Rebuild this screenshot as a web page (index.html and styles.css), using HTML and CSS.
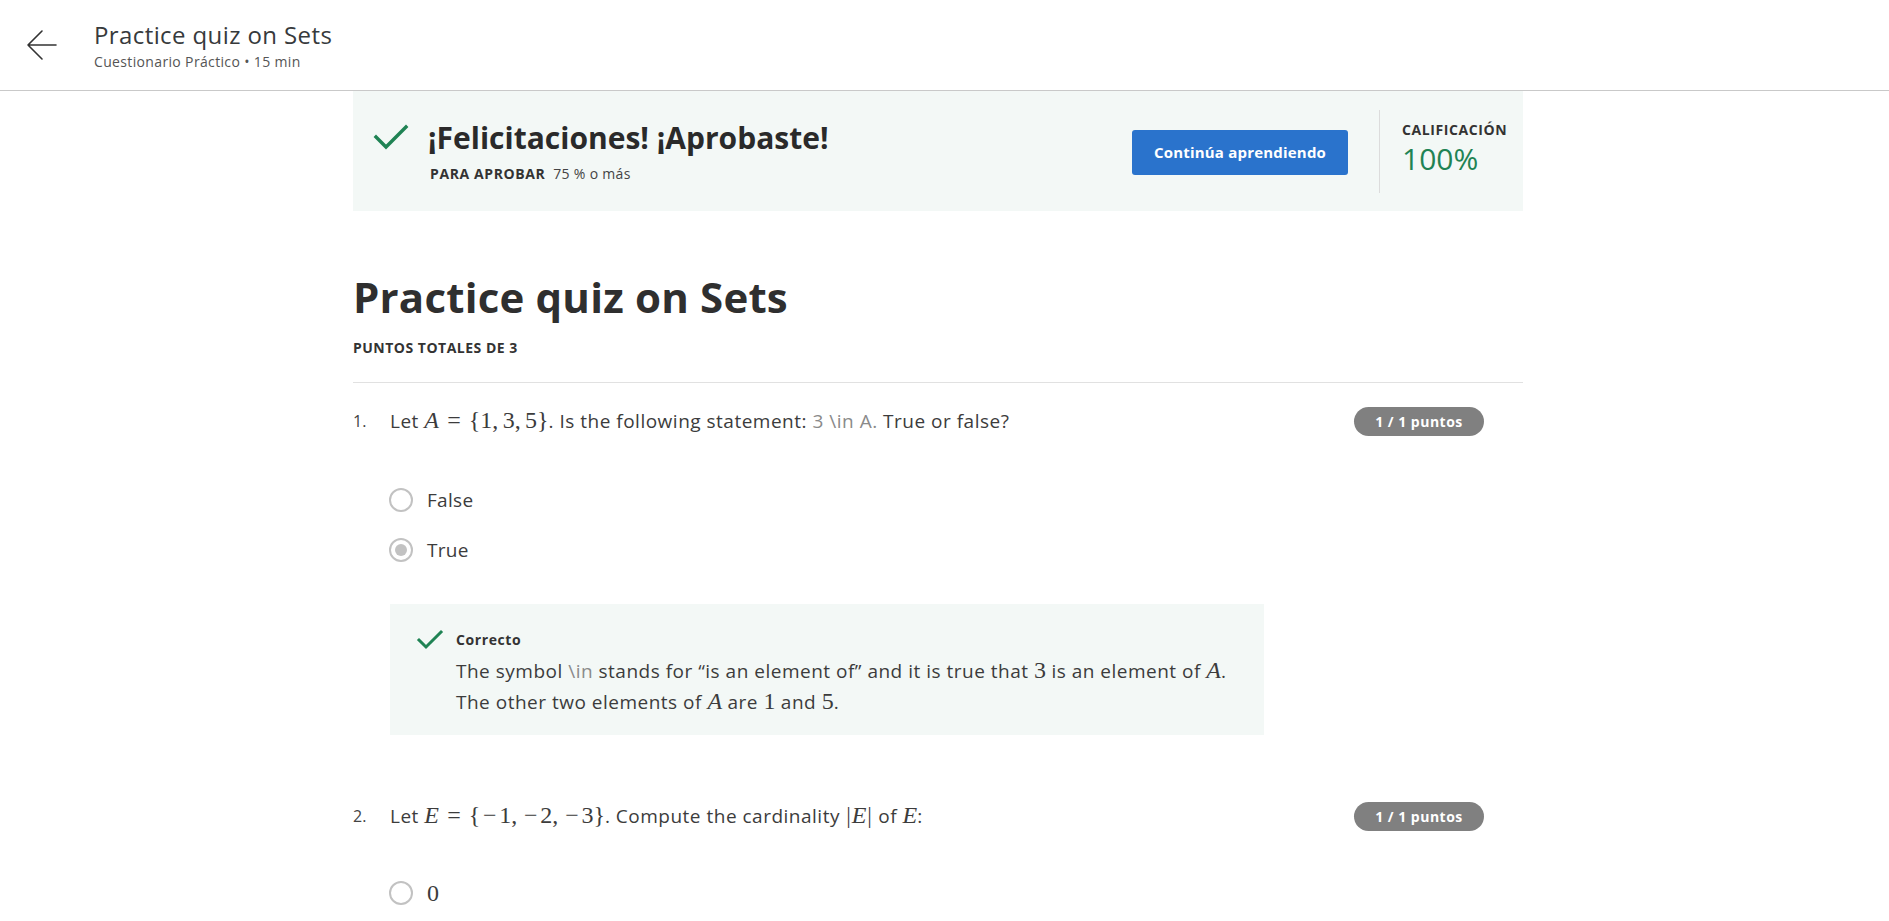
FILE: index.html
```html
<!DOCTYPE html>
<html lang="es">
<head>
<meta charset="utf-8">
<title>Practice quiz on Sets</title>
<link rel="stylesheet" href="styles.css">
</head>
<body>
<header class="topbar">
  <a class="back" href="#" aria-label="Volver">
    <svg width="32" height="32" viewBox="0 0 32 32" fill="none" stroke="#333" stroke-width="1.6" stroke-linecap="round" stroke-linejoin="round">
      <path d="M30 16 H2 M16 2 L2 16 L16 30"/>
    </svg>
  </a>
  <div class="topbar-text">
    <div class="topbar-title">Practice quiz on Sets</div>
    <div class="topbar-sub">Cuestionario Práctico • 15 min</div>
  </div>
</header>

<main class="page">
  <section class="banner">
    <div class="banner-main">
      <svg class="check big" width="36" height="26" viewBox="0 0 36 26" fill="none" stroke="#1f8354" stroke-width="3.4" stroke-linecap="square">
        <path d="M3 13 L13 23 L33 3"/>
      </svg>
      <div>
        <div class="banner-title">¡Felicitaciones! ¡Aprobaste!</div>
        <div class="banner-sub"><span class="label">PARA APROBAR</span> 75 % o más</div>
      </div>
    </div>
    <button class="primary">Continúa aprendiendo</button>
    <div class="grade">
      <div class="label">CALIFICACIÓN</div>
      <div class="grade-value">100%</div>
    </div>
  </section>

  <h1 class="quiz-title">Practice quiz on Sets</h1>
  <div class="points-total">PUNTOS TOTALES DE 3</div>

  <section class="question q1">
    <div class="q-head">
      <span class="q-num">1.</span>
      <div class="q-text">Let <span class="m"><i>A</i><span class="rel">=</span>{1,<span class="pu"></span>3,<span class="pu"></span>5}</span>. Is the following statement: <span class="muted">3 \in A.</span> True or false?</div>
      <span class="badge">1 / 1 puntos</span>
    </div>
    <div class="options">
      <label class="opt"><span class="radio"></span>False</label>
      <label class="opt"><span class="radio on"></span>True</label>
    </div>
    <div class="feedback">
      <svg class="check small" width="28" height="22" viewBox="0 0 28 22" fill="none" stroke="#1f8354" stroke-width="3" stroke-linecap="square">
        <path d="M3 11 L10 18 L25 3"/>
      </svg>
      <div>
        <div class="fb-title">Correcto</div>
        <p class="fb-text">The symbol <span class="muted">\in</span> stands for “is an element of” and it is true that <span class="m">3</span> is an element of <span class="m"><i>A</i></span>.<br>The other two elements of <span class="m"><i>A</i></span> are <span class="m">1</span> and <span class="m">5</span>.</p>
      </div>
    </div>
  </section>

  <section class="question q2">
    <div class="q-head">
      <span class="q-num">2.</span>
      <div class="q-text">Let <span class="m"><i>E</i><span class="rel">=</span>{<span class="mi">−</span>1,<span class="pu"></span><span class="mi">−</span>2,<span class="pu"></span><span class="mi">−</span>3}</span>. Compute the cardinality <span class="m"><span class="bar">|</span><i>E</i><span class="bar">|</span></span> of <span class="m"><i>E</i></span>:</div>
      <span class="badge">1 / 1 puntos</span>
    </div>
    <div class="options">
      <label class="opt"><span class="radio"></span><span class="m">0</span></label>
    </div>
  </section>
</main>
</body>
</html>
```
FILE: styles.css
```css
* { box-sizing: border-box; }
html, body { margin: 0; padding: 0; background: #fff; }
body {
  font-family: "Open Sans", "Noto Sans", sans-serif;
  color: #373a3c;
  overflow: hidden;
}

.topbar {
  height: 91px;
  border-bottom: 1px solid #c9c9c9;
  display: flex;
  align-items: center;
  padding-left: 26px;
}
.back { display: flex; width: 32px; height: 32px; margin-right: 36px; }
.topbar-text { display: flex; flex-direction: column; }
.topbar-title { font-size: 24px; line-height: 32px; color: #373a3c; letter-spacing: 0.4px; }
.topbar-sub { font-size: 14px; line-height: 20px; color: #555; letter-spacing: 0.35px; margin-top: 1px; }

.page {
  width: 1170px;
  margin-left: 353px;
}

.banner {
  height: 120px;
  background: #f3f8f6;
  display: flex;
  align-items: center;
  padding: 0 0 0 20px;
}
.banner-main { flex: 1; display: flex; align-items: flex-start; }
.check.big { margin-top: 6px; margin-right: 19px; }
.banner-title { font-size: 30px; font-weight: 700; line-height: 40px; color: #2a2a2a; }
.banner-sub { font-size: 14px; line-height: 20px; margin-top: 6px; color: #444; padding-left: 2px; letter-spacing: 0.3px; }
.label { font-weight: 700; font-size: 14px; color: #333; margin-right: 4px; letter-spacing: 0.6px; }
.primary {
  font-family: inherit;
  width: 216px;
  height: 45px;
  border: none;
  border-radius: 3px;
  background: #2a73cc;
  color: #fff;
  font-size: 15px;
  font-weight: 700;
  letter-spacing: 0.2px;
  margin-top: 2px;
  margin-right: 31px;
}
.grade {
  align-self: stretch;
  margin: 19px 0 18px;
  border-left: 1px solid #dcdcdc;
  padding-left: 22px;
  padding-top: 11px;
  width: 144px;
  white-space: nowrap;
}
.grade .label { display: block; line-height: 18px; }
.grade-value { font-size: 30px; line-height: 34px; color: #1f8354; margin-top: 3px; }

.quiz-title {
  font-size: 42px;
  line-height: 50px;
  font-weight: 700;
  color: #2f2f2f;
  letter-spacing: 0.2px;
  margin: 61px 0 0;
}
.points-total {
  font-size: 14px;
  font-weight: 700;
  color: #333;
  line-height: 20px;
  letter-spacing: 0.5px;
  margin-top: 16px;
  padding-bottom: 24px;
  border-bottom: 1px solid #e1e1e1;
}

.question { padding-top: 24px; }
.q-head { display: flex; align-items: center; height: 28px; }
.q-num { width: 37px; font-size: 16px; color: #444; }
.q-text { flex: 1; font-size: 19px; line-height: 28px; color: #3c3c3c; letter-spacing: 0.5px; white-space: nowrap; }
.badge {
  width: 130px;
  height: 29px;
  border-radius: 15px;
  background: #808080;
  color: #fff;
  font-size: 14px;
  font-weight: 700;
  letter-spacing: 0.5px;
  display: flex;
  align-items: center;
  justify-content: center;
  margin-right: 39px;
}
.m { font-family: "Liberation Serif", "DejaVu Serif", serif; font-size: 24px; letter-spacing: 0; line-height: 1; }
.m i { font-style: italic; }
.rel { margin: 0 0.34em; }
.pu { margin-right: 0.18em; }
.mi { padding: 0 0.11em; }
.bar { font-size: 0.95em; margin: 0 0.04em; }
.muted { color: #8a8a8a; }

.options { padding-left: 36px; margin-top: 53px; display: flex; flex-direction: column; gap: 26px; }
.opt { display: flex; align-items: center; font-size: 19px; line-height: 24px; color: #3c3c3c; letter-spacing: 0.3px; }
.radio {
  width: 24px; height: 24px;
  border: 2px solid #c2c2c2;
  border-radius: 50%;
  margin-right: 14px;
  display: flex; align-items: center; justify-content: center;
}
.radio.on::after {
  content: "";
  width: 12px; height: 12px;
  border-radius: 50%;
  background: #c2c2c2;
}

.feedback {
  margin: 42px 0 0 37px;
  width: 874px;
  height: 131px;
  background: #f3f8f6;
  display: flex;
  align-items: flex-start;
  padding: 26px 0 0 26px;
}
.check.small { margin-right: 12px; margin-top: -1px; }
.fb-title { font-size: 14px; font-weight: 700; color: #333; line-height: 20px; letter-spacing: 0.6px; }
.fb-text { margin: 6px 0 0; font-size: 19px; line-height: 31px; color: #3c3c3c; letter-spacing: 0.5px; }

.q2 { padding-top: 67px; }
.q2 .options { margin-top: 51px; }
```
